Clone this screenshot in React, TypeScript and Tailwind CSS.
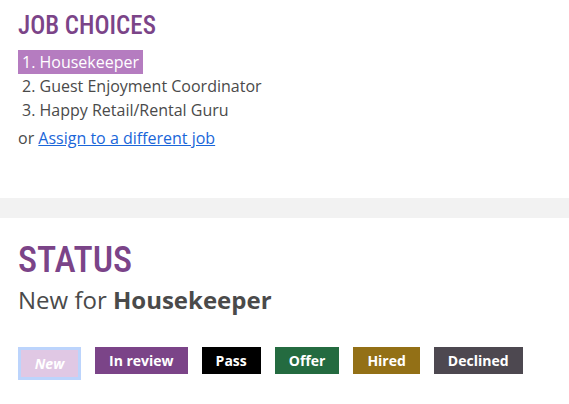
import React from 'react';

const statuses = [
  { label: 'In review', cls: 'bg-[#7b4488]' },
  { label: 'Pass', cls: 'bg-black' },
  { label: 'Offer', cls: 'bg-[#246b40]' },
  { label: 'Hired', cls: 'bg-[#937016]' },
  { label: 'Declined', cls: 'bg-[#4d4850]' },
];

export default function App() {
  return (
    <div className="w-[569px] h-[404px] bg-white text-[#4a4a4a] font-['Open_Sans',sans-serif] overflow-hidden">
      {/* job choices */}
      <section className="px-[18px] pt-[10px] h-[198px]">
        <h2 className="font-['Roboto',sans-serif] [font-stretch:75%] font-medium text-[25px] leading-[32px] text-[#7b4488]">
          JOB CHOICES
        </h2>
        <ol className="mt-[8px] text-[16px] leading-[24px]">
          <li><span className="inline-block bg-[#b57cc0] text-white px-[4px]">1. Housekeeper</span></li>
          <li className="px-[4px]">2. Guest Enjoyment Coordinator</li>
          <li className="px-[4px]">3. Happy Retail/Rental Guru</li>
        </ol>
        <p className="mt-[4px] text-[16px] leading-[24px]">
          or <a href="#" className="text-[#1a66d9] underline">Assign to a different job</a>
        </p>
      </section>

      <div className="h-[20px] bg-[#f2f2f2]" />

      {/* status */}
      <section className="px-[18px] pt-[20px]">
        <h2 className="font-['Roboto',sans-serif] [font-stretch:75%] font-medium text-[36px] leading-[44px] text-[#7b4488]">
          STATUS
        </h2>
        <p className="mt-[2px] text-[24px] leading-[32px]">
          New for <strong className="font-bold">Housekeeper</strong>
        </p>
        <div className="mt-[31px] flex items-start gap-[14px]">
          <span className="border-[3px] border-[#bcd4fc] bg-[#e0c8e4] text-white italic font-bold text-[14px] h-[33px] w-[63px] flex items-center justify-center">
            New
          </span>
          {statuses.map((s) => (
            <span
              key={s.label}
              className={`${s.cls} text-white font-bold text-[14px] h-[27px] px-[14px] flex items-center`}
            >
              {s.label}
            </span>
          ))}
        </div>
      </section>
    </div>
  );
}
